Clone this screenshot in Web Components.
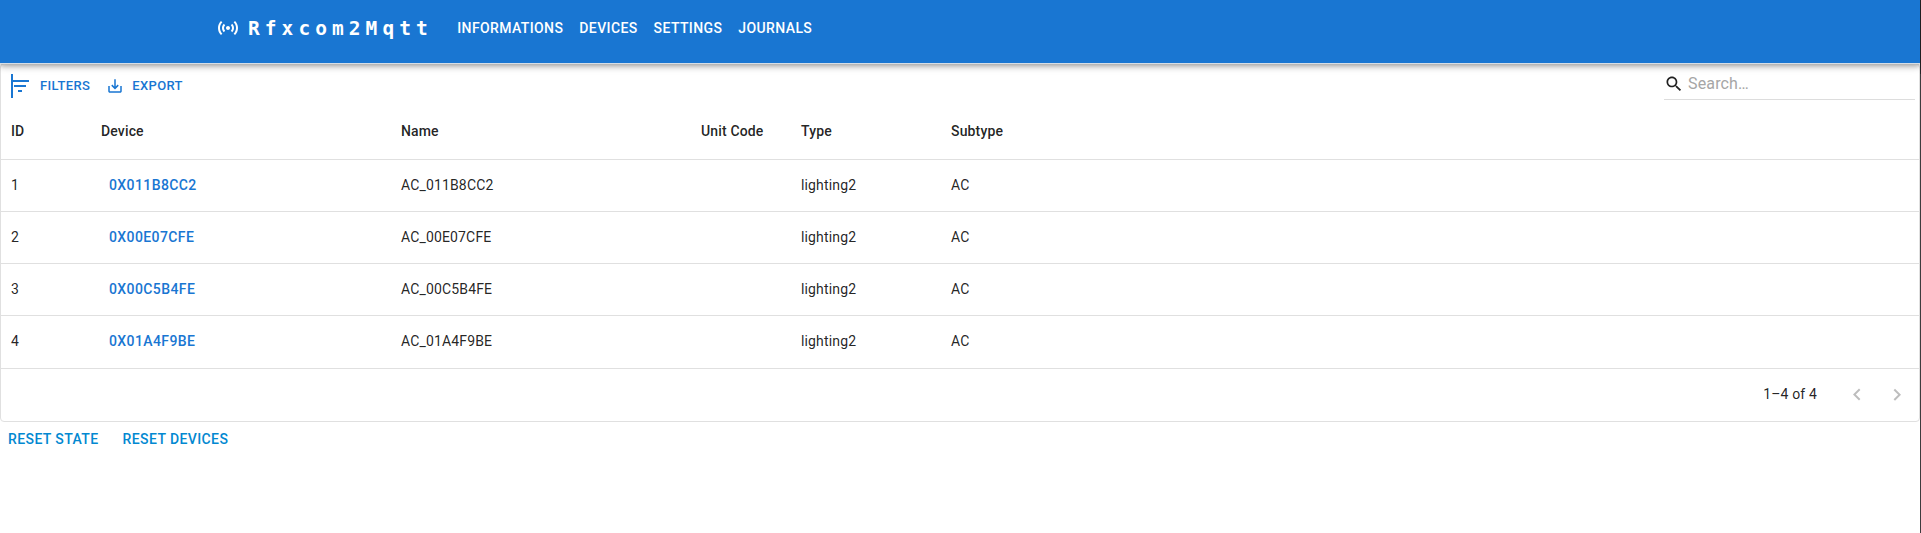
<!DOCTYPE html>
<html lang="en">
<head>
<meta charset="utf-8">
<title>Rfxcom2Mqtt</title>
<style>
html,body{margin:0;height:100%;background:#fff;font-family:Roboto,sans-serif;color:rgba(0,0,0,.87);overflow:hidden}
</style>
</head>
<body>
<rfx-app></rfx-app>
<script>
const define = (name, html, setup) => customElements.define(name, class extends HTMLElement {
  constructor() {
    super();
    const t = document.createElement('template');
    t.innerHTML = html;
    this.attachShadow({mode: 'open'}).append(t.content.cloneNode(true));
  }
  connectedCallback() { if (setup) setup(this, this.shadowRoot); }
});

const ICONS = {
  sensors: 'M7.76 16.24C6.67 15.16 6 13.66 6 12s.67-3.16 1.76-4.24l1.42 1.42C8.45 9.9 8 10.9 8 12c0 1.1.45 2.1 1.17 2.83l-1.41 1.41zm8.48 0C17.33 15.16 18 13.66 18 12s-.67-3.16-1.76-4.24l-1.42 1.42C15.55 9.9 16 10.9 16 12c0 1.1-.45 2.1-1.17 2.83l1.41 1.41zM12 10c-1.1 0-2 .9-2 2s.9 2 2 2 2-.9 2-2-.9-2-2-2zm8 2c0 2.21-.9 4.21-2.35 5.65l1.42 1.42C20.88 17.26 22 14.76 22 12s-1.12-5.26-2.93-7.07l-1.42 1.42C19.1 7.79 20 9.79 20 12zM6.35 6.35 4.93 4.93C3.12 6.74 2 9.24 2 12s1.12 5.26 2.93 7.07l1.42-1.42C4.9 16.21 4 14.21 4 12s.9-4.21 2.35-5.65z',
  filter: 'M3 0h2v6h16v2H5v16H3zM10 18h4v-2h-4zM6 13h12v-2H6z',
  save: 'M19 12v7H5v-7H3v7c0 1.1.9 2 2 2h14c1.1 0 2-.9 2-2v-7h-2zm-6 .67l2.59-2.58L17 11.5l-5 5-5-5 1.41-1.41L11 12.67V3h2z',
  search: 'M15.5 14h-.79l-.28-.27C15.41 12.59 16 11.11 16 9.5 16 5.91 13.09 3 9.5 3S3 5.91 3 9.5 5.91 16 9.5 16c1.61 0 3.09-.59 4.23-1.57l.27.28v.79l5 4.99L20.49 19l-4.99-5zm-6 0C7.01 14 5 11.99 5 9.5S7.01 5 9.5 5 14 7.01 14 9.5 11.99 14 9.5 14z',
  left: 'M15.41 16.09l-4.58-4.59 4.58-4.59L14 5.5l-6 6 6 6z',
  right: 'M8.59 16.34l4.58-4.59-4.58-4.59L10 5.75l6 6-6 6z'
};
define('rfx-icon', `<style>:host{display:block;flex:none;width:var(--size,24px);height:var(--size,24px)}svg{display:block;width:100%;height:100%;fill:currentColor}</style><svg viewBox="0 0 24 24"><path/></svg>`,
  (h, r) => r.querySelector('path').setAttribute('d', ICONS[h.getAttribute('name')]));

define('rfx-button', `<style>
:host{display:inline-flex;align-items:center;box-sizing:border-box;min-width:64px;padding:6px 8px;font-weight:500;font-size:14px;line-height:24.5px;letter-spacing:.4px;text-transform:uppercase;white-space:nowrap;color:#1976d2}
:host([small]){padding:4px 5px;font-size:13px;line-height:22.75px;letter-spacing:.37px}
:host([info]){color:#0288d1}
::slotted(rfx-icon){margin:0 8px 0 -2px}
</style><slot></slot>`);

define('rfx-bar', `<style>
:host{display:block;box-sizing:border-box;position:relative;z-index:2;height:64px;margin-bottom:-1px;background:#1976d2;border-bottom:1px solid #d6dee6;color:#fff;box-shadow:0 2px 4px -1px rgba(0,0,0,.2),0 4px 5px rgba(0,0,0,.14),0 1px 10px rgba(0,0,0,.12)}
.in{box-sizing:border-box;max-width:1536px;margin:0 auto;padding:0 24px;display:flex;align-items:center;height:56px}
.logo{margin-right:8px}
.title{font:700 19.5px/32px "DejaVu Sans Mono",monospace;letter-spacing:5.06px;margin-right:16.4px;padding-top:2px}
nav{display:flex}
rfx-button{color:#fff;letter-spacing:.39px}
</style><div class="in"><rfx-icon class="logo" name="sensors"></rfx-icon><span class="title">Rfxcom2Mqtt</span>
<nav><rfx-button>Informations</rfx-button><rfx-button>Devices</rfx-button><rfx-button>Settings</rfx-button><rfx-button>Journals</rfx-button></nav></div>`);

define('rfx-toolbar', `<style>
:host{display:flex;justify-content:space-between;box-sizing:border-box;height:40px;padding:4px 4px 0}
.actions{display:flex;gap:8px;padding-top:2px}
.actions rfx-button{height:32px}
.save{--size:18px}
.search{display:flex;align-items:center;box-sizing:border-box;width:251px;height:32px;border-bottom:1px solid #ddd;font-size:16px;line-height:23px}
.search rfx-icon{--size:20px;margin-right:4px}
.search span{color:#a6a6a6;letter-spacing:.15px}
</style>
<div class="actions"><rfx-button small><rfx-icon name="filter"></rfx-icon>Filters</rfx-button><rfx-button small><rfx-icon class="save" name="save"></rfx-icon>Export</rfx-button></div>
<div class="search"><rfx-icon name="search"></rfx-icon><span>Search…</span></div>`);

define('rfx-row', `<style>
:host{display:grid;grid-template-columns:90px 300px 300px 100px 150px 150px;box-sizing:border-box;height:52px;align-items:center;border-bottom:1px solid #e0e0e0;font-size:14px;line-height:20px;letter-spacing:.15px}
:host([head]){height:56px;font-weight:500}
:host([last]){border-color:transparent}
::slotted(span){padding:0 0 2px 10px}
::slotted(.action){padding-bottom:0}
</style><slot></slot>`);

define('rfx-pager', `<style>
:host{display:flex;justify-content:flex-end;align-items:center;box-sizing:border-box;height:53px;border-top:1px solid #e0e0e0;font-size:14px;line-height:20px;letter-spacing:.15px;padding-right:10px}
.count{padding-bottom:2px}
.nav{display:flex;gap:16px;color:rgba(0,0,0,.26);margin-left:28px}
</style><span class="count">1–4 of 4</span><div class="nav"><rfx-icon name="left"></rfx-icon><rfx-icon name="right"></rfx-icon></div>`);

define('rfx-grid', `<style>
:host{display:block;box-sizing:border-box;height:359px;border:1px solid #e0e0e0;border-radius:4px}
</style><rfx-toolbar></rfx-toolbar>
<rfx-row head><span>ID</span><span>Device</span><span>Name</span><span>Unit Code</span><span>Type</span><span>Subtype</span></rfx-row>
<div id="rows"></div><rfx-pager></rfx-pager>`, (h, r) => {
  r.querySelector('#rows').innerHTML = ['011B8CC2','00E07CFE','00C5B4FE','01A4F9BE'].map((id, i, all) =>
    `<rfx-row${i === all.length - 1 ? ' last' : ''}><span>${i + 1}</span><span class="action"><rfx-button>0x${id}</rfx-button></span><span>AC_${id}</span><span></span><span>lighting2</span><span>AC</span></rfx-row>`).join('');
});

define('rfx-app', `<style>
:host{display:block;box-sizing:border-box;height:100vh;padding-right:1px;background:linear-gradient(#252528 74px,#3c3c3e 0) right/1px 100% no-repeat}
footer{display:flex;gap:8px;margin-top:-1px}
</style><rfx-bar></rfx-bar><rfx-grid></rfx-grid><footer><rfx-button info>Reset state</rfx-button><rfx-button info>Reset devices</rfx-button></footer>`);
</script>
</body>
</html>
